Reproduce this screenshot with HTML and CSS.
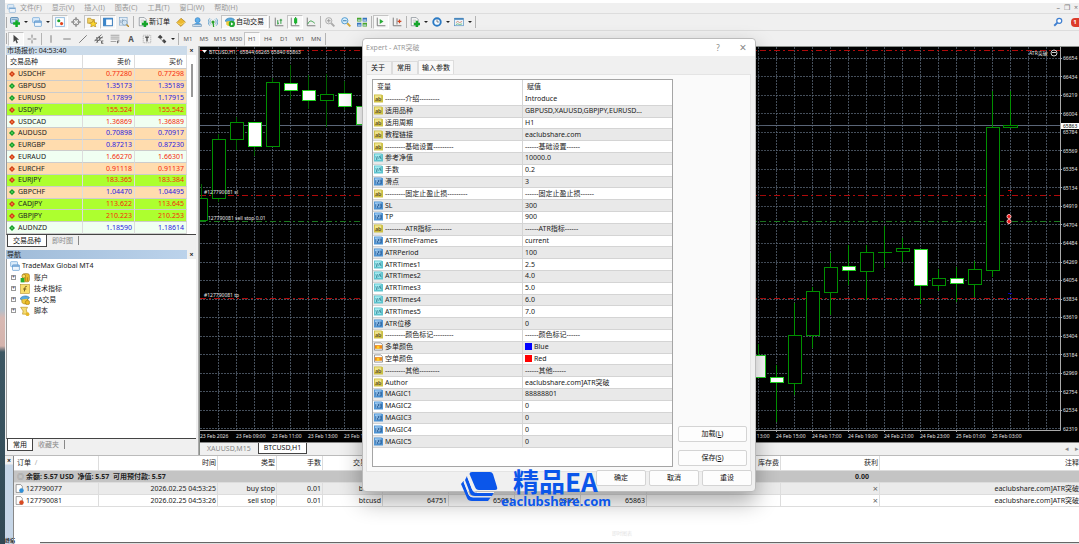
FILE: index.html
```html
<!DOCTYPE html>
<html lang="zh-CN">
<head>
<meta charset="utf-8">
<title>TradeMax Global MT4</title>
<link rel="stylesheet" href="styles.css">
</head>
<body>
<svg class="defs" aria-hidden="true">
  <symbol id="i-win" viewBox="0 0 16 16"><rect x="1" y="1" width="11" height="8" rx="1" fill="#dcecfa" stroke="#5d9bd3"/><rect x="4" y="6" width="11" height="9" rx="1" fill="#eef6fd" stroke="#4a8bc8"/><path d="M4 8h11" stroke="#4a8bc8" stroke-width="2"/></symbol>
  <symbol id="i-new" viewBox="0 0 16 16"><rect x="1" y="1" width="12" height="9" rx="1" fill="#c3dcf0" stroke="#4a80ad" stroke-width="1.500"/><path d="M3 4h8" stroke="#5a8cb5"/><path d="M10.500 5v11M5 10.500h11" stroke="#12ad28" stroke-width="4"/></symbol>
  <symbol id="i-watch" viewBox="0 0 16 16"><rect x="1" y="1" width="14" height="14" fill="#fff" stroke="#8fbadf" stroke-width="1.500"/><circle cx="6" cy="6" r="2.500" fill="#1fa530"/><circle cx="10.500" cy="10.500" r="2.500" fill="#e0421c"/></symbol>
  <symbol id="i-target" viewBox="0 0 16 16"><circle cx="8" cy="8" r="5" fill="none" stroke="#777" stroke-width="1.500"/><path d="M8 0v6M8 10v6M0 8h6M10 8h6" stroke="#777" stroke-width="1.500"/></symbol>
  <symbol id="i-star" viewBox="0 0 16 16"><path d="M1 2h5l1 2h5v6H1z" fill="#f3d264" stroke="#b08a20"/><path d="M10 5l2 4 4 .5-3 3 1 3.500-4-2-4 2 1-3.500-3-3 4-.5z" fill="#fbd62d" stroke="#ad841a"/></symbol>
  <symbol id="i-panel" viewBox="0 0 16 16"><rect x="1" y="2" width="14" height="12" fill="#fff" stroke="#2c72b5" stroke-width="1.500"/><rect x="1" y="2" width="4" height="12" fill="#3b86cb"/><path d="M1 3h14" stroke="#3b86cb" stroke-width="2"/></symbol>
  <symbol id="i-test" viewBox="0 0 16 16"><rect x="1" y="1" width="12" height="12" fill="#e3eef8" stroke="#7ba3c8"/><path d="M3 10V5M6 10V3M9 10V6" stroke="#55799c"/><circle cx="9" cy="9" r="4" fill="#d4e8f7" fill-opacity=".8" stroke="#6a8eae"/><path d="M12 12l4 4" stroke="#b88a28" stroke-width="2"/></symbol>
  <symbol id="i-order" viewBox="0 0 16 16"><path d="M2 1h8l3 3v10H2z" fill="#fff" stroke="#68727c"/><path d="M4 5h6M4 8h4" stroke="#999"/><path d="M11 6v10M6 11h10" stroke="#16a52a" stroke-width="4"/></symbol>
  <symbol id="i-gold" viewBox="0 0 16 16"><path d="M1 9l7-7 7 6-7 7z" fill="#edb92e" stroke="#a47410"/><path d="M1 9l7 3 7-4" fill="none" stroke="#fbe58d"/></symbol>
  <symbol id="i-user" viewBox="0 0 16 16"><circle cx="9" cy="5" r="4" fill="#5fb0ec" stroke="#2d7abf"/><path d="M3 13c0-5 12-5 12 0v2H3z" fill="#4da0e2"/><path d="M1 12h14v3H1z" fill="#d5e5f3" stroke="#7895b0"/></symbol>
  <symbol id="i-radio" viewBox="0 0 16 16"><circle cx="8" cy="8" r="2.500" fill="#2aa12a"/><path d="M8 8l1 8" stroke="#2aa12a" stroke-width="2"/><path d="M5 4a5 5 0 000 8M11 4a5 5 0 010 8M3 2a8 8 0 000 12M13 2a8 8 0 010 12" fill="none" stroke="#6ea9cf" stroke-width="1.500"/></symbol>
  <symbol id="i-hat" viewBox="0 0 16 16"><path d="M0 6c3-5 11-6 15-2-2 5-10 7-15 2z" fill="#58a9dc" stroke="#2675ae"/><path d="M3 7v5c3 3 7 3 9 1V6" fill="#f0c93c" stroke="#ae8512"/><circle cx="12" cy="12" r="3.500" fill="#e9b824" stroke="#a57d12"/></symbol>
  <symbol id="i-auto" viewBox="0 0 16 16"><path d="M0 6c3-5 11-6 15-2-2 5-10 7-15 2z" fill="#58a9dc" stroke="#2675ae"/><path d="M2 7v5c3 3 6 3 8 1V6" fill="#f0c93c"/><circle cx="11" cy="11" r="5" fill="#22a832"/><path d="M9.500 8.500l4 2.500-4 2.500z" fill="#fff"/></symbol>
  <symbol id="i-bars" viewBox="0 0 16 16"><path d="M2 1v13h13" fill="none" stroke="#777" stroke-width="1.500"/><path d="M6 5v7M6 10h2M11 3v8M9 5h4" stroke="#2b9b3c" stroke-width="1.500"/></symbol>
  <symbol id="i-candle" viewBox="0 0 16 16"><path d="M2 1v13h13" fill="none" stroke="#777" stroke-width="1.500"/><path d="M9 0v12" stroke="#168a26" stroke-width="1.500"/><rect x="6.500" y="2" width="5" height="8" fill="#1bb32f"/></symbol>
  <symbol id="i-line" viewBox="0 0 16 16"><path d="M2 1v13h13" fill="none" stroke="#777" stroke-width="1.500"/><path d="M3 11c3-6 5-6 11-1" fill="none" stroke="#2b9b3c" stroke-width="1.500"/></symbol>
  <symbol id="i-zin" viewBox="0 0 16 16"><circle cx="6" cy="6" r="5" fill="#eee" stroke="#aaa" stroke-width="1.500"/><path d="M3 6h6M6 3v6" stroke="#999" stroke-width="1.500"/><path d="M10 10l5 5" stroke="#aaa" stroke-width="3"/></symbol>
  <symbol id="i-zout" viewBox="0 0 16 16"><circle cx="6" cy="6" r="5" fill="#d9effc" stroke="#4b98cf" stroke-width="1.500"/><path d="M3 6h6" stroke="#2b76ad" stroke-width="1.500"/><path d="M10 10l5 5" stroke="#d3a838" stroke-width="3"/></symbol>
  <symbol id="i-tile" viewBox="0 0 16 16"><path d="M0 1h7v6H0zM9 9h7v6H9z" fill="#48a52c"/><path d="M9 1h7v6H9zM0 9h7v6H0z" fill="#3474bf"/><path d="M1 4h5v2H1zM10 4h5v2h-5zM1 12h5v2H1zM10 12h5v2h-5z" fill="#c4dcec"/></symbol>
  <symbol id="i-scroll" viewBox="0 0 16 16"><path d="M2 1v13h13" fill="none" stroke="#777" stroke-width="1.500"/><path d="M6 3l6 4-6 4z" fill="#28aa36"/></symbol>
  <symbol id="i-shift" viewBox="0 0 16 16"><path d="M2 1v13h13M8 2v10" fill="none" stroke="#777" stroke-width="1.500"/><path d="M15 7H9M12 4v6" stroke="#cf4520" stroke-width="2"/></symbol>
  <symbol id="i-clock" viewBox="0 0 16 16"><circle cx="8" cy="8" r="6" fill="#f4faff" stroke="#2b7ac4" stroke-width="3"/><path d="M8 4v4h3" fill="none" stroke="#444"/></symbol>
  <symbol id="i-tmpl" viewBox="0 0 16 16"><rect x="1" y="2" width="14" height="12" fill="#edf6fd" stroke="#4887bd"/><path d="M1 3h14" stroke="#4887bd" stroke-width="3"/><path d="M3 9l3-2 3 2 4-2" fill="none" stroke="#c45a32"/><path d="M3 12l3-1 3 1 4-1" fill="none" stroke="#2d9b3b"/></symbol>
  <symbol id="i-cur" viewBox="0 0 16 16"><path d="M4 1v12l3-3 2 5 2-1-2-5h4z" fill="#444"/></symbol>
  <symbol id="i-cross" viewBox="0 0 16 16"><path d="M8 1v5M8 10v5M1 8h5M10 8h5M7.500 8h1" stroke="#777" stroke-width="1.500"/></symbol>
  <symbol id="i-v" viewBox="0 0 16 16"><path d="M8 2v12" stroke="#777" stroke-width="1.500"/></symbol>
  <symbol id="i-h" viewBox="0 0 16 16"><path d="M2 8h12" stroke="#777" stroke-width="1.500"/></symbol>
  <symbol id="i-d" viewBox="0 0 16 16"><path d="M2 14L14 2" stroke="#777" stroke-width="1.500"/></symbol>
  <symbol id="i-chan" viewBox="0 0 16 16"><path d="M1 11L12 1M3 14L14 4M4 5l2 9M8 3l2 8M1 10h8M5 6h9" stroke="#555" stroke-width="1.200"/><path d="M15 11h-3v4h3M12 13h2" fill="none" stroke="#333"/></symbol>
  <symbol id="i-fib" viewBox="0 0 16 16"><path d="M1 2h14M1 5h14M1 8h14M1 12h9" stroke="#777"/><path d="M15 11h-3v4M12 13h2" fill="none" stroke="#333"/></symbol>
  <symbol id="i-arr" viewBox="0 0 16 16"><path d="M1 5l4-4 4 4-3 3zM8 11l3-3 4 4-3 3z" fill="#444"/><path d="M4 7l7 5" stroke="#777"/></symbol>
  <symbol id="i-tbox" viewBox="0 0 16 16"><rect x="2" y="2" width="12" height="12" fill="none" stroke="#999" stroke-dasharray="2 1"/><path d="M5 5h6M8 5v7" stroke="#444" stroke-width="2"/></symbol>
  <symbol id="i-up" viewBox="0 0 10 10"><path d="M5 0l5 5-5 5-5-5z" fill="#169a28"/><path d="M5 3l2 2-2 2-2-2z" fill="#55d860"/></symbol>
  <symbol id="i-dn" viewBox="0 0 10 10"><path d="M5 0l5 5-5 5-5-5z" fill="#cf3c14"/><path d="M5 3l2 2-2 2-2-2z" fill="#fb8350"/></symbol>
  <symbol id="i-acc" viewBox="0 0 16 16"><rect x="4" y="1" width="11" height="13" rx="3" fill="#eebd28" stroke="#987013"/><circle cx="6" cy="5" r="3" fill="#f8dc64" stroke="#987013"/><rect x="1" y="8" width="6" height="7" fill="#25ad32"/><path d="M9 7v6M12 7v6" stroke="#987013"/></symbol>
  <symbol id="i-fx" viewBox="0 0 16 16"><rect x="1" y="1" width="14" height="14" fill="#f9df6d" stroke="#bb9528"/><path d="M11 4c-3-1-3 1-4 8M5 8h5" fill="none" stroke="#6b561a" stroke-width="1.500"/></symbol>
  <symbol id="i-scr" viewBox="0 0 16 16"><path d="M1 2h11l-2 4 2 7H4l1-5z" fill="#f7dd72" stroke="#b28c20"/><circle cx="12" cy="13" r="3" fill="#e7b728"/></symbol>
  <symbol id="p-ab" viewBox="0 0 10 9"><path d="M0 0h8l2 1v8H0z" fill="#cdbf44"/><path d="M1 1h7v6H1z" fill="#eee38b"/><text x="1" y="7" class="pt">ab</text></symbol>
  <symbol id="p-va" viewBox="0 0 10 9"><path d="M0 0h8l2 1v8H0z" fill="#5dc3ce"/><path d="M1 1h7v6H1z" fill="#a5ebf0"/><path d="M2 3l1 4 1-4M5 6l1-3 2 3M7 2v4" stroke="#27788a" fill="none" stroke-width=".7"/></symbol>
  <symbol id="p-in" viewBox="0 0 10 9"><path d="M0 0h8l2 1v8H0z" fill="#4d94d4"/><path d="M1 1h7v6H1z" fill="#9bc9f1"/><path d="M2 3v4M4 3h1v2H4v2h1M6 3h2v4H6M6 5h2" stroke="#1d518b" fill="none" stroke-width=".9"/></symbol>
  <symbol id="p-co" viewBox="0 0 10 9"><path d="M.5.5h7l2 2v6h-9z" fill="#fff" stroke="#8b8b8b"/><path d="M1 3h8v4H1z" fill="#f08a18"/><path d="M3 4h3v3H3z" fill="#fbd22a"/></symbol>
  <symbol id="i-docb" viewBox="0 0 16 16"><path d="M2 1h8l3 3v11H2z" fill="#fff" stroke="#555"/><circle cx="11.500" cy="11.500" r="4" fill="#2f8fd8"/></symbol>
  <symbol id="i-docs" viewBox="0 0 16 16"><path d="M2 1h8l3 3v11H2z" fill="#fff" stroke="#555"/><circle cx="11.500" cy="11.500" r="4" fill="#d84a22"/></symbol>
</svg>

<div class="desktop">
<main class="app">
  <header class="bars">
    <nav class="menu">
      <svg class="ic"><use href="#i-win"/></svg>
      <a href="#">文件(F)</a><a href="#">显示(V)</a><a href="#">插入(I)</a><a href="#">图表(C)</a><a href="#">工具(T)</a><a href="#">窗口(W)</a><a href="#">帮助(H)</a>
      <span class="winctl"><button aria-label="最小化">–</button><button aria-label="还原">❐</button><button aria-label="关闭">×</button></span>
    </nav>
    <div class="tools tools-main">
      <i class="grip"></i>
      <button class="tb drop" aria-label="新图表"><svg class="ic"><use href="#i-new"/></svg></button>
      <button class="tb drop" aria-label="配置"><svg class="ic"><use href="#i-win"/></svg></button>
      <button class="tb on" aria-label="市场报价"><svg class="ic"><use href="#i-watch"/></svg></button>
      <button class="tb" aria-label="数据窗口"><svg class="ic"><use href="#i-target"/></svg></button>
      <button class="tb on" aria-label="导航"><svg class="ic"><use href="#i-star"/></svg></button>
      <button class="tb on" aria-label="终端"><svg class="ic"><use href="#i-panel"/></svg></button>
      <button class="tb" aria-label="测试"><svg class="ic"><use href="#i-test"/></svg></button>
      <i class="sep"></i>
      <button class="tb wide"><svg class="ic"><use href="#i-order"/></svg>新订单</button>
      <button class="tb" aria-label="编辑器"><svg class="ic"><use href="#i-gold"/></svg></button>
      <button class="tb" aria-label="账户"><svg class="ic"><use href="#i-user"/></svg></button>
      <button class="tb" aria-label="信号"><svg class="ic"><use href="#i-radio"/></svg></button>
      <button class="tb wide on"><svg class="ic"><use href="#i-auto"/></svg>自动交易</button>
      <i class="sep"></i>
      <button class="tb" aria-label="柱状图"><svg class="ic"><use href="#i-bars"/></svg></button>
      <button class="tb on" aria-label="蜡烛图"><svg class="ic"><use href="#i-candle"/></svg></button>
      <button class="tb" aria-label="折线图"><svg class="ic"><use href="#i-line"/></svg></button>
      <i class="sep"></i>
      <button class="tb" aria-label="放大"><svg class="ic"><use href="#i-zin"/></svg></button>
      <button class="tb" aria-label="缩小"><svg class="ic"><use href="#i-zout"/></svg></button>
      <button class="tb" aria-label="平铺"><svg class="ic"><use href="#i-tile"/></svg></button>
      <i class="sep"></i>
      <button class="tb on" aria-label="自动滚动"><svg class="ic"><use href="#i-scroll"/></svg></button>
      <button class="tb" aria-label="图表平移"><svg class="ic"><use href="#i-shift"/></svg></button>
      <i class="sep"></i>
      <button class="tb drop" aria-label="指标"><svg class="ic"><use href="#i-order"/></svg></button>
      <button class="tb drop" aria-label="周期"><svg class="ic"><use href="#i-clock"/></svg></button>
      <button class="tb drop" aria-label="模板"><svg class="ic"><use href="#i-tmpl"/></svg></button>
      <i class="sep"></i>
      <span class="notice"><svg class="ic search" viewBox="0 0 16 16"><circle cx="10" cy="6" r="4" fill="#fff" stroke="#3f7fd0" stroke-width="2"/><path d="M7 9l-5 5" stroke="#3f7fd0" stroke-width="3"/></svg><b>1</b></span>
    </div>
    <div class="tools">
      <i class="grip"></i>
      <button class="tb on" aria-label="光标"><svg class="ic"><use href="#i-cur"/></svg></button>
      <button class="tb" aria-label="十字"><svg class="ic"><use href="#i-cross"/></svg></button>
      <i class="sep"></i>
      <button class="tb" aria-label="垂直线"><svg class="ic"><use href="#i-v"/></svg></button>
      <button class="tb" aria-label="水平线"><svg class="ic"><use href="#i-h"/></svg></button>
      <button class="tb" aria-label="趋势线"><svg class="ic"><use href="#i-d"/></svg></button>
      <button class="tb" aria-label="通道"><svg class="ic"><use href="#i-chan"/></svg></button>
      <button class="tb" aria-label="斐波那契"><svg class="ic"><use href="#i-fib"/></svg></button>
      <button class="tb letter">A</button>
      <button class="tb" aria-label="标签"><svg class="ic"><use href="#i-tbox"/></svg></button>
      <button class="tb drop" aria-label="箭头"><svg class="ic"><use href="#i-arr"/></svg></button>
      <i class="sep"></i>
      <button class="tb tf">M1</button><button class="tb tf">M5</button><button class="tb tf">M15</button><button class="tb tf">M30</button><button class="tb tf on">H1</button><button class="tb tf">H4</button><button class="tb tf">D1</button><button class="tb tf">W1</button><button class="tb tf">MN</button>
      <i class="sep"></i>
    </div>
  </header>

  <div class="work">
    <aside class="side">
      <section class="watch">
        <h2 class="cap">市场报价: 04:53:40<button aria-label="关闭">×</button></h2>
        <div class="watch-body">
          <table class="quotes">
            <thead><tr><th>交易品种</th><th>卖价</th><th>买价</th></tr></thead>
            <tbody>
              <tr class="pe dn"><td><svg><use href="#i-dn"/></svg>USDCHF</td><td>0.77280</td><td>0.77298</td></tr>
              <tr class="pe up"><td><svg><use href="#i-up"/></svg>GBPUSD</td><td>1.35173</td><td>1.35189</td></tr>
              <tr class="pe up"><td><svg><use href="#i-up"/></svg>EURUSD</td><td>1.17899</td><td>1.17915</td></tr>
              <tr class="gr dn"><td><svg><use href="#i-dn"/></svg>USDJPY</td><td>155.524</td><td>155.542</td></tr>
              <tr class="mi dn"><td><svg><use href="#i-dn"/></svg>USDCAD</td><td>1.36869</td><td>1.36889</td></tr>
              <tr class="pe up"><td><svg><use href="#i-up"/></svg>AUDUSD</td><td>0.70898</td><td>0.70917</td></tr>
              <tr class="pe up"><td><svg><use href="#i-up"/></svg>EURGBP</td><td>0.87213</td><td>0.87230</td></tr>
              <tr class="mi dn"><td><svg><use href="#i-dn"/></svg>EURAUD</td><td>1.66270</td><td>1.66301</td></tr>
              <tr class="pe dn"><td><svg><use href="#i-dn"/></svg>EURCHF</td><td>0.91118</td><td>0.91137</td></tr>
              <tr class="gr dn"><td><svg><use href="#i-dn"/></svg>EURJPY</td><td>183.365</td><td>183.384</td></tr>
              <tr class="pe up"><td><svg><use href="#i-up"/></svg>GBPCHF</td><td>1.04470</td><td>1.04495</td></tr>
              <tr class="gr dn"><td><svg><use href="#i-dn"/></svg>CADJPY</td><td>113.622</td><td>113.645</td></tr>
              <tr class="gr dn"><td><svg><use href="#i-dn"/></svg>GBPJPY</td><td>210.223</td><td>210.253</td></tr>
              <tr class="mi up"><td><svg><use href="#i-up"/></svg>AUDNZD</td><td>1.18590</td><td>1.18614</td></tr>
            </tbody>
          </table>
          <div class="scroll"><i></i></div>
        </div>
        <div class="tabs"><button class="cur">交易品种</button><button>即时图</button></div>
      </section>
      <section class="navi">
        <h2 class="cap deep">导航<button aria-label="关闭">×</button></h2>
        <ul class="tree">
          <li class="root"><svg class="ic"><use href="#i-win"/></svg>TradeMax Global MT4</li>
          <li><i class="plus">+</i><svg class="ic"><use href="#i-acc"/></svg>账户</li>
          <li><i class="plus">+</i><svg class="ic"><use href="#i-fx"/></svg>技术指标</li>
          <li><i class="plus">+</i><svg class="ic"><use href="#i-hat"/></svg>EA交易</li>
          <li><i class="plus">+</i><svg class="ic"><use href="#i-scr"/></svg>脚本</li>
        </ul>
        <div class="tabs"><button class="cur">常用</button><button>收藏夹</button></div>
      </section>
    </aside>

    <section class="chartwrap">
      <svg class="chart" viewBox="200 47 879 395" preserveAspectRatio="xMinYMin slice" role="img" aria-label="BTCUSD,H1">
        <defs>
          <clipPath id="plot"><rect x="200" y="47" width="860" height="383"/></clipPath>
        </defs>
        <rect x="200" y="47" width="879" height="395" fill="#000"/>
        <g clip-path="url(#plot)">
          <path class="grid" d="M200 58.500h860M200 76.500h860M200 95.500h860M200 113.500h860M200 132.500h860M200 150.500h860M200 169.500h860M200 187.500h860M200 206.500h860M200 224.500h860M200 243.500h860M200 262.500h860M200 280.500h860M200 299.500h860M200 317.500h860M200 336.500h860M200 354.500h860M200 373.500h860M200 391.500h860M200 410.500h860M200 428.500h860"/>
          <path class="grid" d="M218.500 47v383M236.500 47v383M254.500 47v383M272.500 47v383M290.500 47v383M308.500 47v383M326.500 47v383M344.500 47v383M362.500 47v383M758.500 47v383M776.500 47v383M794.500 47v383M812.500 47v383M830.500 47v383M848.500 47v383M866.500 47v383M884.500 47v383M902.500 47v383M920.500 47v383M938.500 47v383M956.500 47v383M974.500 47v383M992.500 47v383M1010.500 47v383M1028.500 47v383M1046.500 47v383"/>
          <path d="M200 125.500h860" stroke="#5a6678"/>
          <path class="stop" d="M200 50.500h860M200 195.500h860M200 298.500h860"/>
          <path class="pend" d="M200 221.500h860"/>
          <path class="wick" d="M201.500 184v14M218.500 134v68M236.500 117v33M254.500 122v34M272.500 78v4M290.500 65v34M308.500 75v34M326.500 74v53M344.500 81v29"/>
          <path class="wick hi" d="M758.500 344v12M776.500 365v57M794.500 303v32M794.500 384v11M812.500 287v4M812.500 336v12M830.500 253v14M830.500 292v23M848.500 245v40M866.500 245v7M866.500 272v28M884.500 226v42M902.500 238v10M902.500 252v10M920.500 285v19M938.500 269v9M938.500 285v6M956.500 267v35M974.500 261v9M974.500 284v13M992.500 91v36M992.500 271v6M1010.500 91v35"/>
          <g class="hollow"><path d="M200 198.500h7.500v22H200"/><rect x="212.500" y="139.500" width="13" height="59"/><rect x="230.500" y="122.500" width="13" height="17"/><rect x="266.500" y="82.500" width="13" height="64"/><rect x="320.500" y="94.500" width="13" height="6"/><rect x="788.500" y="335.500" width="13" height="48"/><rect x="806.500" y="291.500" width="13" height="44"/><rect x="824.500" y="267.500" width="13" height="25"/><rect x="860.500" y="252.500" width="13" height="19"/><path d="M878 252.500h14"/><rect x="896.500" y="248.500" width="13" height="3"/><rect x="932.500" y="278.500" width="13" height="7"/><rect x="968.500" y="269.500" width="13" height="15"/><rect x="986.500" y="127.500" width="13" height="143"/><rect x="1003.500" y="125.500" width="14" height="2"/></g>
          <g class="solid"><rect x="248.500" y="122.500" width="13" height="24"/><rect x="284.500" y="83.500" width="13" height="7"/><rect x="302.500" y="90.500" width="13" height="10"/><rect x="338.500" y="93.500" width="13" height="13"/><rect x="356.500" y="106.500" width="13" height="18"/><rect x="752.500" y="355.500" width="13" height="22"/><rect x="770.500" y="377.500" width="13" height="5"/><rect x="842.500" y="266.500" width="13" height="4"/><rect x="914.500" y="249.500" width="13" height="36"/><rect x="950.500" y="278.500" width="13" height="5"/></g>
          <path d="M1008 190.500h4" stroke="#c00"/><path d="M1008 293.500h4M1008 298.500h4" stroke="#00a"/>
          <circle cx="1009" cy="216.500" r="2" fill="#e11" stroke="#fbb"/><circle cx="1009" cy="221.500" r="2" fill="#e11" stroke="#fbb"/>
        </g>
        <path d="M200 430.500h860.500V47M1060 58.500h2M1060 76.500h2M1060 95.500h2M1060 113.500h2M1060 150.500h2M1060 169.500h2M1060 187.500h2M1060 206.500h2M1060 224.500h2M1060 243.500h2M1060 262.500h2M1060 280.500h2M1060 299.500h2M1060 317.500h2M1060 336.500h2M1060 354.500h2M1060 373.500h2M1060 391.500h2M1060 410.500h2M776.500 430v2M812.500 430v2M848.500 430v2M884.500 430v2M920.500 430v2M956.500 430v2M992.500 430v2" fill="none" stroke="#aaa"/>
        <path d="M202 50h5l-2.500 3z" fill="#fff"/>
        <g class="ct">
          <text x="209" y="54">BTCUSD,H1&#160;&#160; 65844 66265 65840 65863</text>
          <text x="204" y="194">#127790081 sl</text><text x="208" y="220">127790081 sell stop 0.01</text><text x="204" y="297">#127790081 tp</text>
          <text x="1029" y="55">ATR突破</text>
          <text x="200" y="438">23 Feb 2026</text><text x="236" y="438">23 Feb 09:00</text><text x="272" y="438">23 Feb 11:00</text><text x="308" y="438">23 Feb 13:00</text><text x="344" y="438">23 Feb 15:00</text>
          <text x="740" y="438">24 Feb 13:00</text><text x="776" y="438">24 Feb 15:00</text><text x="812" y="438">24 Feb 17:00</text><text x="848" y="438">24 Feb 19:00</text><text x="884" y="438">24 Feb 21:00</text><text x="920" y="438">24 Feb 23:00</text><text x="956" y="438">25 Feb 01:00</text><text x="992" y="438">25 Feb 03:00</text>
          <text x="1063" y="60">66654</text><text x="1063" y="79">66434</text><text x="1063" y="97">66219</text><text x="1063" y="116">66004</text><text x="1063" y="134">65784</text><text x="1063" y="153">65569</text><text x="1063" y="171">65354</text><text x="1063" y="190">65134</text><text x="1063" y="208">64919</text><text x="1063" y="227">64704</text><text x="1063" y="245">64484</text><text x="1063" y="264">64269</text><text x="1063" y="282">64054</text><text x="1063" y="301">63834</text><text x="1063" y="319">63619</text><text x="1063" y="338">63404</text><text x="1063" y="357">63184</text><text x="1063" y="375">62969</text><text x="1063" y="394">62754</text><text x="1063" y="412">62534</text><text x="1063" y="431">62319</text>
        </g>
        <circle cx="1054" cy="53" r="3" fill="none" stroke="#ccc"/><path d="M1052 52.500h4" stroke="#ccc"/>
        <rect x="1061" y="123" width="18" height="6" fill="#fff"/><text class="now" x="1063" y="128">65863</text>
      </svg>
      <div class="charttabs"><button>XAUUSD,M15</button><button class="cur">BTCUSD,H1</button><span class="arrows"><button aria-label="左">◂</button><button aria-label="右">▸</button></span></div>
    </section>
  </div>

  <section class="term">
    <div class="rail"><button aria-label="关闭">×</button><span>终端</span></div>
    <div class="term-main">
      <table class="orders">
        <colgroup><col class="c-id"><col class="c-time"><col class="c-type"><col class="c-lot"><col class="c-sym"><col class="c-num"><col class="c-num"><col class="c-num"><col class="c-num"><col class="c-swap"><col class="c-pl"><col></colgroup>
        <thead><tr><th>订单 &#160;<em>/</em></th><th>时间</th><th>类型</th><th>手数</th><th>交易品种</th><th>价格</th><th>止损</th><th>止盈</th><th>价格</th><th>库存费</th><th>获利</th><th>注释</th></tr></thead>
        <tbody>
          <tr class="bal"><td colspan="10"><i>◎</i>余额: 5.57 USD&#160; 净值: 5.57&#160; 可用预付款: 5.57</td><td class="sum">0.00</td><td></td></tr>
          <tr class="alt"><td><svg class="ic"><use href="#i-docb"/></svg>127790077</td><td>2026.02.25 04:53:25</td><td>buy stop</td><td>0.01</td><td>btcusd</td><td></td><td></td><td></td><td></td><td></td><td class="x">×</td><td>eaclubshare.com]ATR突破</td></tr>
          <tr><td><svg class="ic"><use href="#i-docs"/></svg>127790081</td><td>2026.02.25 04:53:26</td><td>sell stop</td><td>0.01</td><td>btcusd</td><td>64751</td><td>65051</td><td>63851</td><td>65863</td><td></td><td class="x">×</td><td>eaclubshare.com]ATR突破</td></tr>
        </tbody>
      </table>
      <p class="faint">即时图表</p>
      <div class="edge"></div>
    </div>
  </section>
</main>

<form class="dialog" role="dialog" aria-label="Expert - ATR突破">
  <div class="dtitle"><span>Expert - ATR突破</span><button type="button" aria-label="帮助">?</button><button type="button" class="close" aria-label="关闭">×</button></div>
  <div class="dtabs"><button type="button">关于</button><button type="button">常用</button><button type="button" class="cur">输入参数</button></div>
  <div class="dpane">
    <div class="list">
      <table class="params">
        <thead><tr><th>变量</th><th>赋值</th></tr></thead>
        <tbody>
          <tr><td><svg><use href="#p-ab"/></svg>---------介绍---------</td><td>Introduce</td></tr>
          <tr><td><svg><use href="#p-ab"/></svg>适用品种</td><td>GBPUSD,XAUUSD,GBPJPY,EURUSD...</td></tr>
          <tr><td><svg><use href="#p-ab"/></svg>适用周期</td><td>H1</td></tr>
          <tr><td><svg><use href="#p-ab"/></svg>教程链接</td><td>eaclubshare.com</td></tr>
          <tr><td><svg><use href="#p-ab"/></svg>---------基础设置---------</td><td>------基础设置------</td></tr>
          <tr><td><svg><use href="#p-va"/></svg>参考净值</td><td>10000.0</td></tr>
          <tr><td><svg><use href="#p-va"/></svg>手数</td><td>0.2</td></tr>
          <tr><td><svg><use href="#p-in"/></svg>滑点</td><td>3</td></tr>
          <tr><td><svg><use href="#p-ab"/></svg>---------固定止盈止损---------</td><td>------固定止盈止损------</td></tr>
          <tr><td><svg><use href="#p-in"/></svg>SL</td><td>300</td></tr>
          <tr><td><svg><use href="#p-in"/></svg>TP</td><td>900</td></tr>
          <tr><td><svg><use href="#p-ab"/></svg>---------ATR指标---------</td><td>------ATR指标------</td></tr>
          <tr><td><svg><use href="#p-in"/></svg>ATRTimeFrames</td><td>current</td></tr>
          <tr><td><svg><use href="#p-in"/></svg>ATRPeriod</td><td>100</td></tr>
          <tr><td><svg><use href="#p-va"/></svg>ATRTimes1</td><td>2.5</td></tr>
          <tr><td><svg><use href="#p-va"/></svg>ATRTimes2</td><td>4.0</td></tr>
          <tr><td><svg><use href="#p-va"/></svg>ATRTimes3</td><td>5.0</td></tr>
          <tr><td><svg><use href="#p-va"/></svg>ATRTimes4</td><td>6.0</td></tr>
          <tr><td><svg><use href="#p-va"/></svg>ATRTimes5</td><td>7.0</td></tr>
          <tr><td><svg><use href="#p-in"/></svg>ATR位移</td><td>0</td></tr>
          <tr><td><svg><use href="#p-ab"/></svg>---------颜色标记---------</td><td>------颜色标记------</td></tr>
          <tr><td><svg><use href="#p-co"/></svg>多单颜色</td><td><i class="sw blue"></i>Blue</td></tr>
          <tr><td><svg><use href="#p-co"/></svg>空单颜色</td><td><i class="sw red"></i>Red</td></tr>
          <tr><td><svg><use href="#p-ab"/></svg>---------其他---------</td><td>------其他------</td></tr>
          <tr><td><svg><use href="#p-ab"/></svg>Author</td><td>eaclubshare.com]ATR突破</td></tr>
          <tr><td><svg><use href="#p-in"/></svg>MAGIC1</td><td>88888801</td></tr>
          <tr><td><svg><use href="#p-in"/></svg>MAGIC2</td><td>0</td></tr>
          <tr><td><svg><use href="#p-in"/></svg>MAGIC3</td><td>0</td></tr>
          <tr><td><svg><use href="#p-in"/></svg>MAGIC4</td><td>0</td></tr>
          <tr><td><svg><use href="#p-in"/></svg>MAGIC5</td><td>0</td></tr>
        </tbody>
      </table>
    </div>
    <div class="dside"><button type="button">加载(<u>L</u>)</button><button type="button">保存(<u>S</u>)</button></div>
  </div>
  <div class="dfoot"><button type="button">确定</button><button type="button">取消</button><button type="button">重设</button></div>
</form>

<div class="mark">
  <svg class="logo" viewBox="0 0 38 32" aria-hidden="true"><g fill="#0b56ea"><path d="M12 1h18q2 0 3 2l4 13q1 3-2 3H19q-3 0-4-3L9.500 3Q9.500 1 12 1z"/><path d="M7 5l5 13q1 3 4 3h18l-2 4H15q-4 0-5-3L5 9z"/><path d="M3.500 10l5 13q1 3 4 3H31l-3 4H12q-4 0-5-3L1 13z"/></g><path d="M7.500 5.500l5 13q1 3 4 3H34M4 11l5 12.500q1 2.500 4 2.500h18" fill="none" stroke="#f4f4f4"/></svg>
  <div class="marktext"><strong>精品EA</strong><span>eaclubshare.com</span></div>
</div>
</div>
</body>
</html>
```

FILE: styles.css
```css
* { box-sizing: border-box; }
body {
  margin: 0;
  font: 7px/10px "Noto Sans", "Noto Sans CJK SC", sans-serif;
  color: #222;
}
button { font: inherit; color: inherit; background: none; border: 0; padding: 0; margin: 0; }
a { color: inherit; text-decoration: none; }
table { border-collapse: separate; border-spacing: 0; }
th { font-weight: 400; }
th, td { padding: 0; white-space: nowrap; }
i, em { font-style: normal; }
.defs { display: none; }
.pt { font: bold 6px "Noto Sans", sans-serif; fill: #66591a; }
.ic { width: 10px; height: 10px; flex: none; }

.desktop {
  position: relative;
  min-height: 100vh;
  padding-left: 5px;
  overflow: hidden;
  background: linear-gradient(#bfc9d3 0, #b3bfca 310px, #d8b9b3 318px, #d4b3ac 346px, #3d5763 352px, #304854 100%);
}
.app {
  display: flex;
  flex-direction: column;
  min-height: 100vh;
  background: #f0f0f0;
  border-top: 3px solid #fff;
}

/* menu and toolbars */
.menu { display: flex; align-items: center; height: 11px; padding-left: 2px; color: #999; border-bottom: 1px solid #ddd; }
.menu a { margin-right: 10px; }
.menu .ic { margin-right: 4px; opacity: .7; width: 9px; height: 9px; }
.winctl { margin-left: auto; display: flex; gap: 4px; color: #777; padding-right: 1px; }
.tools { display: flex; align-items: center; height: 15px; }
.tools-main { height: 17px; border-bottom: 1px solid #ddd; }
.grip { width: 1px; height: 11px; margin: 0 1px; background: #aaa; }
.sep { width: 1px; height: 12px; margin: 0 1px; background: #b4b4b4; }
.tb { display: flex; align-items: center; justify-content: center; width: 16px; height: 14px; flex: none; }
.tb.on { background: #f8f8f8; border: 1px solid #c4c4c4; border-right-color: #fff; border-bottom-color: #fff; }
.tb.wide { width: auto; padding: 0 3px; gap: 1px; color: #111; }
.tb.drop { width: 22px; gap: 4px; }
.tb.drop::after { content: ""; border: 2px solid transparent; border-top: 2px solid #222; border-bottom: 0; }
.tb.letter { font-weight: 700; font-size: 8px; color: #555; }
.tb.tf { font-size: 6px; color: #555; }
.notice { margin-left: auto; display: flex; align-items: center; gap: 8px; }
.notice b { width: 8px; height: 9px; border-radius: 4px 0 0 4px; background: #dc3b2a; color: #fff; text-align: center; line-height: 9px; font-size: 6px; }

/* side panels */
.work { display: flex; flex: 1; }
.side { width: 194px; flex: none; display: flex; flex-direction: column; gap: 2px; padding: 0 2px 3px 1px; border-right: 1px solid #aaa; }
.cap { display: flex; align-items: center; height: 9px; margin: 0; padding-left: 1px; font: inherit; background: #cbdbea; color: #222; }
.cap.deep { background: linear-gradient(90deg, #9fbbd8, #bdd4ec); }
.cap button { margin-left: auto; width: 9px; height: 9px; line-height: 8px; font-weight: 700; background: #f0f0f0; }
.watch-body { display: flex; height: 180px; background: #fff; border-left: 1px solid #999; border-bottom: 1px solid #444; }
.quotes { flex: 1; height: 179px; table-layout: fixed; }
.quotes th { height: 14px; text-align: right; padding-right: 3px; border-right: 1px solid #ddd; border-bottom: 1px solid #ccc; }
.quotes th:first-child { width: 76px; text-align: left; padding-left: 3px; }
.quotes td { line-height: 10px; text-align: right; padding-right: 2px; border-right: 1px solid #ddd; border-bottom: 1px solid #ccc; }
.quotes td:first-child { text-align: left; padding-left: 2px; color: #222; }
.quotes td svg { width: 6px; height: 6px; margin-right: 3px; vertical-align: -1px; }
.pe { background: #ffdcae; }
.gr { background: #adff2f; }
.mi { background: #f0fff2; }
.dn { color: #f52a0c; }
.up { color: #2a20e0; }
.scroll { width: 9px; padding: 9px 0 0 4px; }
.scroll i { display: block; width: 2px; height: 33px; background: #999; }
.tabs { display: flex; height: 13px; padding-left: 1px; }
.tabs button { color: #888; padding: 0 5px; border-right: 1px solid #888; height: 9px; margin-top: 1px; line-height: 9px; }
.tabs .cur { color: #111; background: #fff; border: 1px solid #444; border-top: 0; height: 12px; margin: 0; line-height: 11px; }
.navi { flex: 1; display: flex; flex-direction: column; }
.tree { flex: 1; margin: 0; padding: 1px 0 0 3px; list-style: none; background: #fff; border-left: 1px solid #999; border-bottom: 1px solid #444; }
.tree li { display: flex; align-items: center; gap: 4px; height: 11px; padding-left: 1px; }
.tree .root { padding-left: 0; gap: 2px; height: 12px; }
.plus { width: 5px; height: 5px; border: 1px solid #999; font-size: 5px; line-height: 3px; text-align: center; color: #335; }

/* chart */
.chartwrap { flex: 1; min-width: 0; display: flex; flex-direction: column; border-top: 1px solid #8c908c; border-left: 1px solid #8c908c; }
.chart { width: 100%; height: 395px; display: block; background: #000; }
.grid { stroke: #566372; stroke-dasharray: 2 1; fill: none; opacity: .8; }
.stop { stroke: #b00a0a; stroke-dasharray: 6 3 2 3; fill: none; }
.pend { stroke: #1c7a20; stroke-dasharray: 6 3 2 3; fill: none; }
.wick { stroke: #006000; fill: none; }
.wick.hi { stroke: #008f00; }
.hollow { fill: #000; stroke: #008f00; }
.solid { fill: #fff; stroke: #1fd11f; }
.ct { font: 5px "Noto Sans", "Noto Sans CJK SC", sans-serif; fill: #e4e4e4; }
.now { font: 5px "Noto Sans", sans-serif; fill: #000; }
.charttabs { display: flex; height: 12px; border-top: 1px solid #888; color: #888; }
.charttabs > button { padding: 0 5px; height: 11px; }
.charttabs > button:first-child { padding: 0 7px; }
.charttabs .cur { background: #fff; color: #111; border: 1px solid #444; border-top: 0; }
.arrows { margin-left: auto; display: flex; gap: 6px; }

/* terminal */
.term { display: flex; height: 89px; border-top: 1px solid #bbb; background: #fff; }
.rail { width: 8px; display: flex; flex-direction: column; justify-content: space-between; background: linear-gradient(#f0f0f0 8px, #c6d6e7 9px); white-space: nowrap; }
.rail span { height: 8px; line-height: 8px; font-size: 5px; font-weight: 700; }
.rail button { height: 8px; line-height: 7px; font-weight: 700; }
.term-main { flex: 1; min-width: 0; display: flex; flex-direction: column; border-left: 1px solid #888; }
.orders { width: 100%; table-layout: fixed; }
.orders th, .orders td { text-align: right; padding-right: 1px; border-right: 1px solid #ddd; border-bottom: 1px solid #ddd; height: 12px; line-height: 10px; overflow: hidden; }
.orders th { height: 15px; }
.orders th:first-child, .orders td:first-child { text-align: left; padding-left: 3px; }
.orders tbody td:first-child { padding-left: 1px; }
.orders tbody td:last-child, .orders th:last-child { padding-right: 0; border-right: 0; }
.orders em { color: #aaa; }
.orders .ic { width: 9px; height: 9px; margin-right: 2px; vertical-align: -2px; }
.bal { background: #c4c4c4; font-weight: 700; }
.bal i { color: #888; margin: 0 2px; font-weight: 400; }
.orders .bal td { border-right: 0; }
.orders .sum { padding-right: 11px; }
.alt { background: #ebebeb; }
.orders .x { color: #666; padding-right: 1px; font-size: 9px; }
.c-id { width: 85px; } .c-time { width: 119px; } .c-type { width: 59px; } .c-lot { width: 46px; }
.c-sym { width: 60px; } .c-num { width: 66px; } .c-swap { width: 134px; } .c-pl { width: 99px; }
.faint { margin: auto 0 5px; padding-left: 598px; color: #e4e4e4; font-size: 5px; line-height: 8px; }
.edge { height: 2px; margin-left: 26px; border-top: 1px solid #666; background: #ddd; }

/* expert dialog */
.dialog {
  position: absolute;
  left: 362px;
  top: 38px;
  width: 394px;
  display: flex;
  flex-direction: column;
  background: #f0f0f0;
  border: 1px solid #bbb;
  border-radius: 4px;
  box-shadow: 0 10px 22px rgba(0, 0, 0, .32);
}
.dtitle { display: flex; align-items: center; height: 17px; padding: 0 8px 0 3px; background: #fff; border-radius: 4px 4px 0 0; color: #999; }
.dtitle span { flex: 1; }
.dtitle button { width: 8px; margin-left: 17px; font-size: 8px; color: #888; }
.dtitle .close { font-size: 12px; }
.dtabs { display: flex; align-items: flex-end; height: 18px; padding-left: 3px; }
.dtabs button { height: 13px; padding: 0 6px 0 4px; border: 1px solid #ddd; border-bottom: 0; background: #f3f3f3; color: #111; }
.dtabs .cur { height: 14px; padding: 0 3px; background: #fafafa; }
.dpane { display: flex; gap: 5px; margin: 0 4px 0 3px; padding: 4px 3px 4px 5px; background: #fafafa; border: 1px solid #e4e4e4; }
.list { flex: 1; height: 388px; background: #fff; border: 1px solid #a5a5a5; }
.params { width: 100%; height: 368px; table-layout: fixed; }
.params th { height: 14px; text-align: left; padding-left: 4px; }
.params th:first-child { width: 150px; }
.params th:first-child, .params td:first-child { border-right: 1px solid #d4d4d4; }
.params td { line-height: 10px; padding-left: 2px; border-bottom: 1px solid #d4d4d4; }
.params td:first-child { padding-left: 1px; }
.params td svg { width: 9px; height: 9px; margin-right: 2px; vertical-align: -2px; }
.params tbody tr:nth-child(even) { background: #e9e9e9; }
.sw { display: inline-block; width: 7px; height: 7px; margin-right: 2px; vertical-align: -1px; }
.blue { background: #00f; }
.red { background: #f00; }
.dside { width: 69px; display: flex; flex-direction: column; justify-content: flex-end; gap: 8px; padding-bottom: 1px; }
.dside button, .dfoot button { height: 16px; background: #fdfdfd; border: 1px solid #d4d4d4; border-radius: 2px; color: #111; }
.dfoot { display: flex; justify-content: flex-end; gap: 3px; padding: 0 3px 5px; margin-top: -2px; }
.dfoot button { width: 50px; }

/* site mark laid over the dialog and terminal */
.mark { position: absolute; left: 460px; top: 467px; display: flex; gap: 3px; align-items: flex-start; color: #0b56ea; font-weight: 700; }
.logo { width: 38px; height: 32px; margin-top: 4px; }
.marktext { display: flex; flex-direction: column; align-items: flex-start; }
.marktext strong { margin-left: 12px; font: 700 26px/27px "Noto Sans CJK SC", sans-serif; }
.marktext span { font-size: 13px; line-height: 14px; }
```
